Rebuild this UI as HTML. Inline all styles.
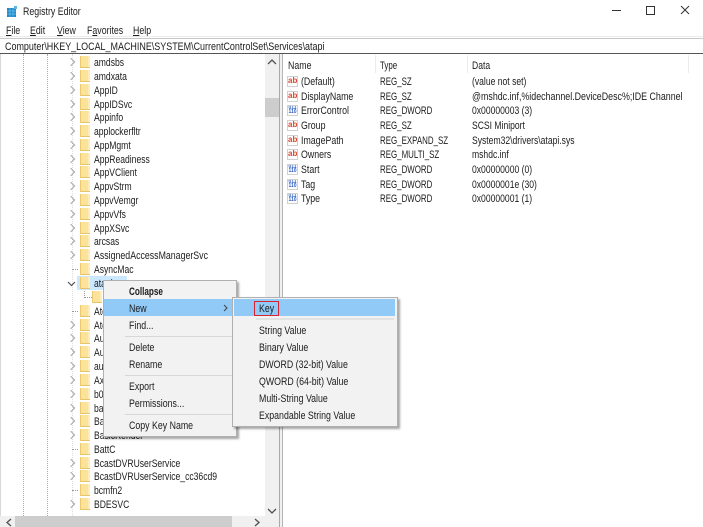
<!DOCTYPE html>
<html><head><meta charset="utf-8"><style>
html,body{margin:0;padding:0;background:#fff}
#w{position:relative;width:703px;height:527px;overflow:hidden;background:#fff;font:11px/14px "Liberation Sans",sans-serif;color:#1c1c1c;filter:blur(.3px)}
#w div{position:absolute;white-space:nowrap}
.x,.t,.n,.m,.s{transform:scaleX(.8);transform-origin:0 50%}
.y{transform:scaleX(.72);transform-origin:0 50%}
.v{transform:scaleX(.78);transform-origin:0 50%}
.t{left:94px;margin-top:-6px;transform:scaleX(.78)}
.f{left:80px;width:9px;height:11px;margin-top:-6px;background:#fce29a;border-left:1px solid #ecc96c;border-bottom:1px solid #e8c468;box-shadow:inset -2px 0 0 #fdeeb8}
.c{left:69px;width:5px;height:5px;margin-top:-3px;border-top:1px solid #a6a6a6;border-right:1px solid #a6a6a6;transform:rotate(45deg)}
.d{left:72px;width:6px;height:0;border-top:1px dotted #999}
.n{left:301px;margin-top:-6px}.y{left:380px;margin-top:-6px}.v{left:472px;margin-top:-6px}
.i{left:287px;width:9px;height:9px;margin-top:-5px;border:1px solid #d0d0d0;background:#fff;font:bold 8px/8px "Liberation Sans",sans-serif;color:#d9442b;text-align:center;overflow:hidden}
.b{color:#2d5fc4;font-size:5px;line-height:4px;font-weight:bold}
.m{margin-top:-6px;left:129px;color:#1c1c1c}
.s{margin-top:-6px;left:259px;color:#1c1c1c}
.r{left:125px;width:108px;height:1px;background:#d7d7d7}
</style></head><body><div id="w">
<svg style="position:absolute;left:7px;top:6px" width="11" height="11"><rect width="9" height="9" y="2" fill="#1e88c9"/><path d="M3 2v9M6 2v9M0 5h9M0 8h9" stroke="#6fc0ea" stroke-width=".7"/><rect x="7" y="0" width="3" height="3" fill="#58b6e8"/></svg>
<div class="x" style="left:23px;top:5px">Registry Editor</div>
<div style="left:612px;top:10px;width:9px;height:1px;background:#333"></div>
<div style="left:646px;top:6px;width:7px;height:7px;border:1px solid #333"></div>
<svg style="position:absolute;left:680px;top:5px" width="11" height="11"><path d="M1 1l8 8M9 1l-8 8" stroke="#333" stroke-width="1"/></svg>
<div class="x" style="left:6px;top:24px"><u>F</u>ile</div><div class="x" style="left:30px;top:24px"><u>E</u>dit</div><div class="x" style="left:57px;top:24px"><u>V</u>iew</div><div class="x" style="left:87px;top:24px">F<u>a</u>vorites</div><div class="x" style="left:133px;top:24px"><u>H</u>elp</div>
<div style="left:0;top:36px;width:703px;height:1px;background:#ececec"></div>
<div style="left:0;top:38px;width:703px;height:14px;border-top:1px solid #c8c8c8;border-bottom:1px solid #555"></div>
<div class="x" style="left:5px;top:40px;transform:scaleX(.814)">Computer\HKEY_LOCAL_MACHINE\SYSTEM\CurrentControlSet\Services\atapi</div>
<div style="left:0;top:54px;width:1px;height:473px;background:#d8d8d8"></div>
<div style="left:23px;top:54px;height:462px;border-left:1px dotted #aaa"></div>
<div style="left:47px;top:54px;height:462px;border-left:1px dotted #aaa"></div>
<div style="left:72px;top:54px;height:462px;border-left:1px dotted #ddd"></div>
<div style="left:77px;top:276px;width:50px;height:14px;background:#cce8ff"></div>

<div class="c" style="left:68px;top:62px"></div><div class="f" style="top:62px"></div><div class="t" style="top:62px">amdsbs</div>
<div class="c" style="left:68px;top:76px"></div><div class="f" style="top:76px"></div><div class="t" style="top:76px">amdxata</div>
<div class="c" style="left:68px;top:90px"></div><div class="f" style="top:90px"></div><div class="t" style="top:90px">AppID</div>
<div class="c" style="left:68px;top:104px"></div><div class="f" style="top:104px"></div><div class="t" style="top:104px">AppIDSvc</div>
<div class="c" style="left:68px;top:117px"></div><div class="f" style="top:117px"></div><div class="t" style="top:117px">Appinfo</div>
<div class="c" style="left:68px;top:131px"></div><div class="f" style="top:131px"></div><div class="t" style="top:131px">applockerfltr</div>
<div class="c" style="left:68px;top:145px"></div><div class="f" style="top:145px"></div><div class="t" style="top:145px">AppMgmt</div>
<div class="c" style="left:68px;top:159px"></div><div class="f" style="top:159px"></div><div class="t" style="top:159px">AppReadiness</div>
<div class="c" style="left:68px;top:172px"></div><div class="f" style="top:172px"></div><div class="t" style="top:172px">AppVClient</div>
<div class="c" style="left:68px;top:186px"></div><div class="f" style="top:186px"></div><div class="t" style="top:186px">AppvStrm</div>
<div class="c" style="left:68px;top:200px"></div><div class="f" style="top:200px"></div><div class="t" style="top:200px">AppvVemgr</div>
<div class="c" style="left:68px;top:214px"></div><div class="f" style="top:214px"></div><div class="t" style="top:214px">AppvVfs</div>
<div class="c" style="left:68px;top:228px"></div><div class="f" style="top:228px"></div><div class="t" style="top:228px">AppXSvc</div>
<div class="c" style="left:68px;top:241px"></div><div class="f" style="top:241px"></div><div class="t" style="top:241px">arcsas</div>
<div class="c" style="left:68px;top:255px"></div><div class="f" style="top:255px"></div><div class="t" style="top:255px;transform:scaleX(.8)">AssignedAccessManagerSvc</div>
<div class="d" style="top:269px"></div><div class="f" style="top:269px"></div><div class="t" style="top:269px">AsyncMac</div>
<svg style="position:absolute;left:67px;top:281px" width="9" height="6"><path d="M1 1l3.500 3.500L8 1" fill="none" stroke="#555" stroke-width="1.200"/></svg>
<div class="f" style="top:283px"></div><div class="t" style="top:283px">atapi</div>
<div style="left:84px;top:291px;width:7px;height:6px;border-left:1px dotted #999;border-bottom:1px dotted #999"></div>
<div class="f" style="left:92px;top:297px"></div>
<div class="d" style="top:311px"></div><div class="f" style="top:311px"></div><div class="t" style="top:311px">Atc</div>
<div class="c" style="left:68px;top:325px"></div><div class="f" style="top:325px"></div><div class="t" style="top:325px">Atc</div>
<div class="c" style="left:68px;top:338px"></div><div class="f" style="top:338px"></div><div class="t" style="top:338px">Au</div>
<div class="c" style="left:68px;top:352px"></div><div class="f" style="top:352px"></div><div class="t" style="top:352px">Au</div>
<div class="c" style="left:68px;top:366px"></div><div class="f" style="top:366px"></div><div class="t" style="top:366px">au</div>
<div class="c" style="left:68px;top:380px"></div><div class="f" style="top:380px"></div><div class="t" style="top:380px">Ax</div>
<div class="c" style="left:68px;top:394px"></div><div class="f" style="top:394px"></div><div class="t" style="top:394px">b0</div>
<div class="c" style="left:68px;top:408px"></div><div class="f" style="top:408px"></div><div class="t" style="top:408px">ba</div>
<div class="c" style="left:68px;top:421px"></div><div class="f" style="top:421px"></div><div class="t" style="top:421px">Ba</div>
<div class="c" style="left:68px;top:435px"></div><div class="f" style="top:435px"></div><div class="t" style="top:435px">BasicRender</div>
<div class="d" style="top:449px"></div><div class="f" style="top:449px"></div><div class="t" style="top:449px">BattC</div>
<div class="c" style="left:68px;top:463px"></div><div class="f" style="top:463px"></div><div class="t" style="top:463px">BcastDVRUserService</div>
<div class="c" style="left:68px;top:476px"></div><div class="f" style="top:476px"></div><div class="t" style="top:476px">BcastDVRUserService_cc36cd9</div>
<div class="d" style="top:490px"></div><div class="f" style="top:490px"></div><div class="t" style="top:490px">bcmfn2</div>
<div class="c" style="left:68px;top:504px"></div><div class="f" style="top:504px"></div><div class="t" style="top:504px">BDESVC</div>
<div class="f" style="top:516px;height:4px;margin-top:0"></div>

<div style="left:265px;top:54px;width:14px;height:473px;background:#f0f0f0"></div>
<div style="left:265px;top:98px;width:14px;height:19px;background:#cdcdcd"></div>
<svg style="position:absolute;left:267px;top:59px" width="10" height="6"><path d="M1 5l4-4 4 4" fill="none" stroke="#505050" stroke-width="1.300"/></svg>
<svg style="position:absolute;left:267px;top:508px" width="10" height="6"><path d="M1 1l4 4 4-4" fill="none" stroke="#505050" stroke-width="1.300"/></svg>
<div style="left:279px;top:54px;width:1px;height:473px;background:#a9a9a9"></div>
<div style="left:280px;top:54px;width:2px;height:473px;background:#f0f0f0"></div>
<div style="left:282px;top:54px;width:1px;height:473px;background:#b5b5b5"></div>
<div style="left:0;top:516px;width:265px;height:11px;background:#f0f0f0"></div>
<div style="left:15px;top:516px;width:217px;height:11px;background:#cdcdcd"></div>
<svg style="position:absolute;left:6px;top:518px" width="6" height="9"><path d="M5 1L1 4.500 5 8" fill="none" stroke="#505050" stroke-width="1.300"/></svg>
<svg style="position:absolute;left:254px;top:518px" width="6" height="9"><path d="M1 1l4 3.500L1 8" fill="none" stroke="#505050" stroke-width="1.300"/></svg>

<div style="left:375px;top:55px;width:1px;height:18px;background:#ececec"></div>
<div style="left:467px;top:55px;width:1px;height:18px;background:#ececec"></div>
<div style="left:688px;top:55px;width:1px;height:18px;background:#ececec"></div>
<div class="n" style="left:288px;top:65px">Name</div><div class="y" style="top:65px">Type</div><div class="v" style="top:65px">Data</div>

<div class="i" style="top:81px">ab</div><div class="n" style="top:81px">(Default)</div><div class="y" style="top:81px">REG_SZ</div><div class="v" style="top:81px">(value not set)</div>
<div class="i" style="top:96px">ab</div><div class="n" style="top:96px">DisplayName</div><div class="y" style="top:96px">REG_SZ</div><div class="v" style="top:96px;transform:scaleX(.806)">@mshdc.inf,%idechannel.DeviceDesc%;IDE Channel</div>
<div class="i b" style="top:110px">011<br>110</div><div class="n" style="top:110px">ErrorControl</div><div class="y" style="top:110px">REG_DWORD</div><div class="v" style="top:110px">0x00000003 (3)</div>
<div class="i" style="top:125px">ab</div><div class="n" style="top:125px">Group</div><div class="y" style="top:125px">REG_SZ</div><div class="v" style="top:125px">SCSI Miniport</div>
<div class="i" style="top:140px">ab</div><div class="n" style="top:140px">ImagePath</div><div class="y" style="top:140px">REG_EXPAND_SZ</div><div class="v" style="top:140px">System32\drivers\atapi.sys</div>
<div class="i" style="top:154px">ab</div><div class="n" style="top:154px">Owners</div><div class="y" style="top:154px">REG_MULTI_SZ</div><div class="v" style="top:154px">mshdc.inf</div>
<div class="i b" style="top:169px">011<br>110</div><div class="n" style="top:169px">Start</div><div class="y" style="top:169px">REG_DWORD</div><div class="v" style="top:169px">0x00000000 (0)</div>
<div class="i b" style="top:184px">011<br>110</div><div class="n" style="top:184px">Tag</div><div class="y" style="top:184px">REG_DWORD</div><div class="v" style="top:184px">0x0000001e (30)</div>
<div class="i b" style="top:198px">011<br>110</div><div class="n" style="top:198px">Type</div><div class="y" style="top:198px">REG_DWORD</div><div class="v" style="top:198px">0x00000001 (1)</div>

<div style="left:103px;top:280px;width:132px;height:155px;background:#f2f2f2;border:1px solid #b0b0b0;box-shadow:2px 2px 2px rgba(0,0,0,.35)"></div>
<div style="left:104px;top:299px;width:128px;height:17px;background:#91c9f7"></div>
<div class="m" style="top:291px;font-weight:bold;transform:scaleX(.74)">Collapse</div>
<div class="m" style="top:308px">New</div>
<svg style="position:absolute;left:223px;top:304px" width="5" height="8"><path d="M1 1l3 3-3 3" fill="none" stroke="#444"/></svg>
<div class="m" style="top:325px">Find...</div>
<div class="r" style="top:336px"></div>
<div class="m" style="top:347px">Delete</div>
<div class="m" style="top:364px">Rename</div>
<div class="r" style="top:375px"></div>
<div class="m" style="top:386px">Export</div>
<div class="m" style="top:403px">Permissions...</div>
<div class="r" style="top:414px"></div>
<div class="m" style="top:425px">Copy Key Name</div>

<div style="left:232px;top:297px;width:164px;height:128px;background:#f2f2f2;border:1px solid #b0b0b0;box-shadow:2px 2px 2px rgba(0,0,0,.35)"></div>
<div style="left:234px;top:299px;width:161px;height:17px;background:#91c9f7"></div>
<div style="left:254px;top:301px;width:23px;height:13px;border:1px solid #d9232e"></div>
<div class="s" style="top:308px">Key</div>
<div style="left:256px;top:318px;width:138px;height:2px;background:#e2e2e2"></div>
<div class="s" style="top:330px">String Value</div>
<div class="s" style="top:347px">Binary Value</div>
<div class="s" style="top:364px">DWORD (32-bit) Value</div>
<div class="s" style="top:381px">QWORD (64-bit) Value</div>
<div class="s" style="top:398px">Multi-String Value</div>
<div class="s" style="top:415px">Expandable String Value</div>
</div></body></html>
